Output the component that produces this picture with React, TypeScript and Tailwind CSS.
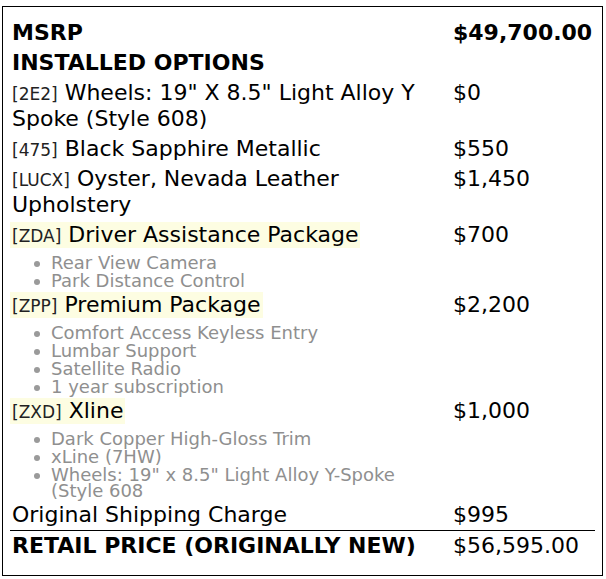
import React from 'react';

type Option = {
  code: string;
  name: string;
  price: string;
  items?: string[];
};

const OPTIONS: Option[] = [
  { code: '2E2', name: 'Wheels: 19" X 8.5" Light Alloy Y Spoke (Style 608)', price: '$0' },
  { code: '475', name: 'Black Sapphire Metallic', price: '$550' },
  { code: 'LUCX', name: 'Oyster, Nevada Leather Upholstery', price: '$1,450' },
  {
    code: 'ZDA',
    name: 'Driver Assistance Package',
    price: '$700',
    items: ['Rear View Camera', 'Park Distance Control'],
  },
  {
    code: 'ZPP',
    name: 'Premium Package',
    price: '$2,200',
    items: ['Comfort Access Keyless Entry', 'Lumbar Support', 'Satellite Radio', '1 year subscription'],
  },
  {
    code: 'ZXD',
    name: 'Xline',
    price: '$1,000',
    items: ['Dark Copper High-Gloss Trim', 'xLine (7HW)', 'Wheels: 19" x 8.5" Light Alloy Y-Spoke (Style 608'],
  },
];

function Row({ left, right }: { left: React.ReactNode; right: React.ReactNode }) {
  return (
    <div className="grid grid-cols-[441px_1fr]">
      <div className="px-[2px] py-[2px] leading-[26px]">{left}</div>
      <div className="px-[2px] py-[2px] leading-[26px]">{right}</div>
    </div>
  );
}

export default function App() {
  return (
    <div className="pt-[6px] pl-[2px] bg-white" style={{ fontFamily: '"DejaVu Sans", sans-serif' }}>
      <div className="w-[601px] h-[570px] border border-black px-[7px] pt-[11px] text-[22px] text-black">
        <Row left={<span className="font-bold">MSRP</span>} right={<span className="font-bold">$49,700.00</span>} />
        <Row left={<span className="font-bold">INSTALLED OPTIONS</span>} right={null} />

        {OPTIONS.map((opt) => {
          const label = (
            <>
              <span className="text-[17px] leading-none text-[#222]">[{opt.code}]</span> {opt.name}
            </>
          );
          return (
            <div key={opt.code}>
              <Row
                left={
                  opt.items ? (
                    <span className="inline-block align-top -ml-[2px] px-[2px] py-[1px] leading-[24px] bg-[#fdfde2]">{label}</span>
                  ) : (
                    label
                  )
                }
                right={opt.price}
              />
              {opt.items && (
                <ul className="w-[441px] pl-[24px] pt-[5px] pb-[1px] pr-[30px] flex flex-col gap-[2px] text-[18px] leading-[16px] text-[#8f8f8f]">
                  {opt.items.map((item) => (
                    <li key={item} className="flex items-start">
                      <span className="w-[6px] h-[6px] rounded-full bg-[#9a9a9a] mt-[6px] mr-[11px] shrink-0" />
                      <span>{item}</span>
                    </li>
                  ))}
                </ul>
              )}
            </div>
          );
        })}

        <div className="border-b border-black">
          <Row left="Original Shipping Charge" right="$995" />
        </div>
        <Row left={<span className="font-bold">RETAIL PRICE (ORIGINALLY NEW)</span>} right="$56,595.00" />
      </div>
    </div>
  );
}
